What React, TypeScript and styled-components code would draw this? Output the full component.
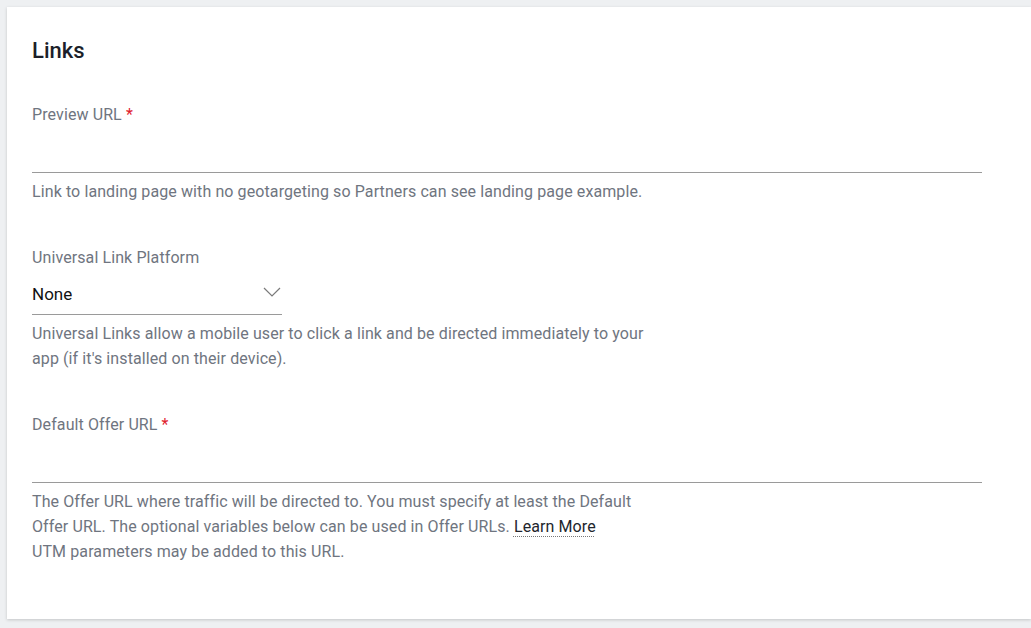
import React from "react";
import styled, { createGlobalStyle } from "styled-components";

const Global = createGlobalStyle`
  html, body { margin: 0; padding: 0; }
  body {
    background: #eef0f2;
    font-family: Roboto, "Noto Sans", "Liberation Sans", sans-serif;
    overflow: hidden;
  }
`;

const Page = styled.div`
  padding: 7px 0 0 7px;
  height: 628px;
  box-sizing: border-box;
`;

const Card = styled.section`
  background: #fff;
  box-shadow: 0 1px 3px rgba(0, 0, 0, 0.18);
  height: 612px;
  box-sizing: border-box;
  padding: 29px 49px 0 25px;
  display: flex;
  flex-direction: column;
`;

const Title = styled.h2`
  margin: 0;
  font-size: 22px;
  font-weight: 500;
  color: #1c1f2a;
  line-height: 30px;
`;

const Field = styled.div<{ $top: number }>`
  margin-top: ${(p) => p.$top}px;
  display: flex;
  flex-direction: column;
`;

const Label = styled.label`
  font-size: 16px;
  color: #6f7580;
  line-height: 20px;
  letter-spacing: 0.1px;
`;

const Req = styled.span`
  color: #e0202d;
`;

const Input = styled.div<{ $h: number }>`
  height: ${(p) => p.$h}px;
  border-bottom: 1px solid #9a9a9a;
`;

const Select = styled.div`
  width: 250px;
  height: 47px;
  border-bottom: 1px solid #9a9a9a;
  display: flex;
  align-items: center;
  justify-content: space-between;
  box-sizing: border-box;
  padding-top: 6px;
`;

const SelectValue = styled.span`
  font-size: 17px;
  color: #111;
`;

const ChevronBox = styled.span`
  display: flex;
  margin: 0 1px 4px 0;
`;

const Help = styled.p<{ $width?: number }>`
  margin: 6px 0 0;
  font-size: 16px;
  line-height: 25px;
  color: #6f7580;
  letter-spacing: 0.1px;
  max-width: ${(p) => (p.$width ? `${p.$width}px` : "none")};
`;

const Learn = styled.a`
  color: #22252d;
  text-decoration: underline dotted #777;
  text-decoration-thickness: 1px;
  text-underline-offset: 4px;
`;

const Chevron = () => (
  <ChevronBox>
    <svg width="18" height="10" viewBox="0 0 18 10" fill="none">
      <path d="M1 1 L9 9 L17 1" stroke="#7a7a7a" strokeWidth="1.2" />
    </svg>
  </ChevronBox>
);

export default function App() {
  return (
    <>
      <Global />
      <Page>
        <Card>
          <Title>Links</Title>
          <Field $top={39}>
            <Label>
              Preview URL <Req>*</Req>
            </Label>
            <Input $h={47} />
            <Help>Link to landing page with no geotargeting so Partners can see landing page example.</Help>
          </Field>
          <Field $top={44}>
            <Label>Universal Link Platform</Label>
            <Select>
              <SelectValue>None</SelectValue>
              <Chevron />
            </Select>
            <Help $width={625}>
              Universal Links allow a mobile user to click a link and be directed immediately to your app (if it's
              installed on their device).
            </Help>
          </Field>
          <Field $top={44}>
            <Label>
              Default Offer URL <Req>*</Req>
            </Label>
            <Input $h={47} />
            <Help $width={610}>
              The Offer URL where traffic will be directed to. You must specify at least the Default Offer URL. The
              optional variables below can be used in Offer URLs. <Learn href="#">Learn More</Learn>
              <br />
              UTM parameters may be added to this URL.
            </Help>
          </Field>
        </Card>
      </Page>
    </>
  );
}
